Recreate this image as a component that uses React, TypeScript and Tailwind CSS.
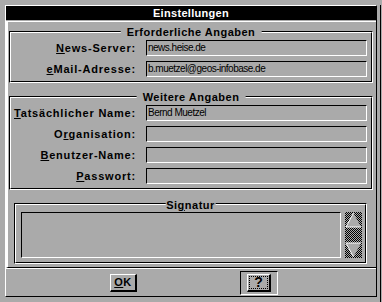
import React from 'react';

const font = "font-['Liberation_Sans',Arial,sans-serif]";

interface GroupProps {
  title: React.ReactNode;
  className?: string;
  titleClass?: string;
  children: React.ReactNode;
}

// etched group box with a centred caption cutting the top line
const Group: React.FC<GroupProps> = ({ title, className, titleClass, children }) => (
  <div className={`relative border border-t-black border-l-black border-r-white border-b-white ${className || ''}`}>
    <div className="border border-t-white border-l-white border-r-black border-b-black">{children}</div>
    <div
      className={`absolute left-1/2 -translate-x-1/2 bg-[#aaaaaa] whitespace-nowrap text-[11px] leading-[12px] font-bold tracking-[0.5px] text-black ${
        titleClass || 'top-[-6px] px-[6px]'
      }`}
    >
      {title}
    </div>
  </div>
);

interface FieldProps {
  pre: string;
  ul: string;
  post: string;
  value?: string;
}

const Field: React.FC<FieldProps> = ({ pre, ul, post, value }) => (
  <div className="flex items-center h-[16px]">
    <div className="w-[125px] text-right text-[11px] leading-[12px] font-bold tracking-[0.8px] whitespace-nowrap">
      {pre}
      <span className="underline underline-offset-[1px]">{ul}</span>
      {post}
    </div>
    <div className="ml-[10px] w-[221px] h-[16px] border border-t-black border-l-black border-r-white border-b-white pl-[1px] text-[10px] leading-[14px] tracking-[-0.5px] whitespace-nowrap overflow-hidden">
      {value}
    </div>
  </div>
);

const ScrollArrows: React.FC = () => (
  <div className="w-[17px] h-[46px] flex flex-col justify-between bg-[repeating-conic-gradient(#000_0_25%,#aaaaaa_0_50%)] bg-[length:2px_2px]">
    <svg width="17" height="16" viewBox="0 0 17 16">
      <polygon points="8.5,1 16,15 1,15" fill="#aaaaaa" />
      <polyline points="1,15 8.5,1" fill="none" stroke="#fff" strokeWidth="1" />
      <polyline points="1,15 16,15" fill="none" stroke="#fff" strokeWidth="1" />
    </svg>
    <svg width="17" height="16" viewBox="0 0 17 16">
      <polygon points="1,1 16,1 8.5,15" fill="#aaaaaa" />
      <polyline points="1,1 16,1" fill="none" stroke="#fff" strokeWidth="1" />
      <polyline points="1,1 8.5,15" fill="none" stroke="#fff" strokeWidth="1" />
    </svg>
  </div>
);

export default function App() {
  return (
    <div className={`w-[382px] h-[302px] bg-[#aaaaaa] text-black overflow-hidden ${font}`}>
      <div className="w-[381px] h-[300px] border-r border-b border-black">
        <div className="ml-[5px] mt-[5px] w-[372px] h-[292px] border border-t-white border-l-white border-r-black border-b-black flex flex-col">
          {/* Title bar */}
          <div className="h-[14px] bg-black text-white text-center text-[11px] leading-[14px] font-bold tracking-[0.3px]">
            Einstellungen
          </div>

          {/* Content */}
          <div className="mt-px border-t border-l-2 border-t-white border-l-white border-b border-b-black pt-[9px] pb-[3px] pl-[1px]">
            <Group title="Erforderliche Angaben" className="w-[364px]">
              <div className="pt-[7px] pb-[4px] flex flex-col gap-[5px]">
                <Field pre="" ul="N" post="ews-Server:" value="news.heise.de" />
                <Field pre="" ul="e" post="Mail-Adresse:" value="b.muetzel@geos-infobase.de" />
              </div>
            </Group>

            <Group title="Weitere Angaben" className="w-[364px] mt-[13px]">
              <div className="pt-[7px] pb-[4px] flex flex-col gap-[5px]">
                <Field pre="" ul="T" post="atsächlicher Name:" value="Bernd Muetzel" />
                <Field pre="O" ul="r" post="ganisation:" />
                <Field pre="" ul="B" post="enutzer-Name:" />
                <Field pre="" ul="P" post="asswort:" />
              </div>
            </Group>

            <Group
              title={
                <>
                  Si<span className="underline underline-offset-[1px]">g</span>natur
                </>
              }
              titleClass="top-[-5px] px-[1px]"
              className="w-[353px] mt-[13px] ml-[5px]"
            >
              <div className="flex pt-[7px] pb-[4px] pl-[5px] gap-[4px]">
                <div className="w-[320px] h-[46px] border border-t-black border-l-black border-r-white border-b-white" />
                <ScrollArrows />
              </div>
            </Group>
          </div>

          {/* Buttons */}
          <div className="flex-1 border-t border-t-white flex items-center pl-[104px]">
            <div className="w-[27px] h-[18px] border-t border-l border-t-white border-l-white border-r-2 border-b-2 border-r-black border-b-black flex items-center justify-center text-[11px] leading-[12px] font-bold tracking-[0.5px]">
              <span className="underline underline-offset-[1px]">O</span>K
            </div>
            <div className="ml-[103px] w-[38px] h-[24px] border border-t-black border-l-black border-r-white border-b-white flex items-center justify-center">
              <div className="w-[24px] h-[18px] border-t border-l border-t-white border-l-white border-r-2 border-b-2 border-r-black border-b-black p-[1px]">
                <div className="w-full h-full border border-dotted border-black flex items-center justify-center text-[14px] leading-[14px] font-bold">
                  ?
                </div>
              </div>
            </div>
          </div>
        </div>
      </div>
    </div>
  );
}
